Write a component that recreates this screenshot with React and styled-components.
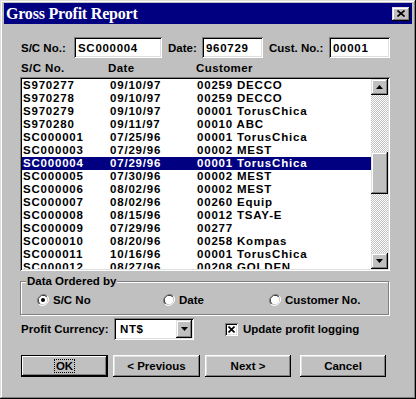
import React from 'react';
import styled, { createGlobalStyle } from 'styled-components';

const GlobalStyle = createGlobalStyle`
  body { margin: 0; background: #c0c0c0; }
  * { box-sizing: border-box; }
`

const raised = `
  box-shadow: inset -1px -1px #000, inset 1px 1px #dfdfdf, inset -2px -2px #808080, inset 2px 2px #fff;
`
const sunken = `
  box-shadow: inset 1px 1px #808080, inset -1px -1px #fff, inset 2px 2px #000, inset -2px -2px #dfdfdf;
`

const Window = styled.div`
  width: 416px;
  height: 399px;
  background: #c0c0c0;
  padding: 3px 4px 4px 4px;
  ${raised}
  font-family: "Liberation Sans", Arial, sans-serif;
  font-weight: bold;
  font-size: 11.5px;
  color: #000;
  white-space: nowrap;
  display: flex;
  flex-direction: column;
`

const TitleBar = styled.div`
  height: 21px;
  background: #000080;
  display: flex;
  align-items: center;
  justify-content: space-between;
  padding: 0 2px 0 2px;
`

const Title = styled.span`
  font-family: "Liberation Serif", "Times New Roman", serif;
  font-weight: bold;
  font-size: 16px;
  letter-spacing: -0.2px;
  color: #fff;
`

const CloseButton = styled.div`
  width: 18px;
  height: 14px;
  background: #c0c0c0;
  ${raised}
  display: flex;
  align-items: center;
  justify-content: center;
`

const Content = styled.div`
  padding: 0 22px 0 16px;
  display: flex;
  flex-direction: column;
`

const TopRow = styled.div`
  margin-top: 13px;
  padding-left: 1px;
  display: flex;
  gap: 6px;
  height: 21px;
`

const Field = styled.label`
  display: grid;
  grid-template-columns: ${p => p.lw}px ${p => p.iw}px;
  align-items: center;
`

const TextBox = styled.div`
  height: 21px;
  background: #fff;
  ${sunken}
  padding: 0 4px;
  letter-spacing: 0.7px;
  display: flex;
  align-items: center;
`

const HeaderRow = styled.div`
  margin-top: 4px;
  display: grid;
  grid-template-columns: 87px 88px 1fr;
  padding-left: 1px;
  line-height: 13px;
  letter-spacing: 0.4px;
`

const ListBox = styled.div`
  margin-top: 2px;
  height: 194px;
  background: #fff;
  ${sunken}
  padding: 2px;
  display: flex;
`

const Rows = styled.div`
  flex: 1;
  overflow: hidden;
`

const Row = styled.div`
  display: grid;
  grid-template-columns: 87px 87px 1fr;
  padding-left: 1px;
  height: 13px;
  line-height: 13px;
  letter-spacing: 0.8px;
  background: ${p => p.selected ? '#000080' : 'transparent'};
  color: ${p => p.selected ? '#fff' : '#000'};
`

const ScrollBar = styled.div`
  width: 17px;
  display: flex;
  flex-direction: column;
  background: repeating-conic-gradient(#c0c0c0 0 25%, #fff 0 50%) 0 0 / 2px 2px;
`

const ScrollButton = styled.div`
  flex: none;
  height: 16px;
  background: #c0c0c0;
  ${raised}
  display: flex;
  align-items: center;
  justify-content: center;
`

const Track = styled.div`
  flex: 1;
  display: flex;
  flex-direction: column;
  padding-top: ${p => p.offset}px;
`

const Thumb = styled.div`
  height: 42px;
  background: #c0c0c0;
  ${raised}
`

const Group = styled.fieldset`
  margin: 4px 1px 0 0;
  padding: 6px 0 8px 16px;
  border: 1px solid #808080;
  box-shadow: inset 1px 1px #fff, 1px 1px #fff;
  display: flex;
`

const Legend = styled.legend`
  margin-left: -11px;
  padding: 0 1px;
  line-height: 13px;
  background: #c0c0c0;
`

const RadioItem = styled.div`
  width: ${p => p.w ? `${p.w}px` : 'auto'};
  display: flex;
  align-items: center;
  gap: 4px;
`

const CurrencyRow = styled.div`
  margin-top: 3px;
  height: 22px;
  display: flex;
  align-items: center;
  padding-left: 1px;
`

const FieldLabel = styled.span`
  width: ${p => p.w}px;
`

const Combo = styled.div`
  width: 80px;
  height: 22px;
  background: #fff;
  ${sunken}
  padding: 2px 2px 2px 6px;
  letter-spacing: 0.6px;
  display: flex;
  align-items: center;
  justify-content: space-between;
`

const ComboButton = styled.div`
  width: 16px;
  height: 18px;
  background: #c0c0c0;
  ${raised}
  display: flex;
  align-items: center;
  justify-content: center;
`

const Check = styled.div`
  margin-left: 31px;
  display: flex;
  align-items: center;
  gap: 5px;
`

const CheckBox = styled.div`
  width: 13px;
  height: 13px;
  background: #fff;
  ${sunken}
  display: flex;
  align-items: center;
  justify-content: center;
`

const ButtonRow = styled.div`
  margin-top: 15px;
  display: flex;
  gap: 5px;
  padding-left: 1px;
`

const Button = styled.div`
  width: ${p => p.w}px;
  height: 22px;
  margin-left: ${p => p.ml || 0}px;
  background: #c0c0c0;
  ${p => p.primary
    ? 'box-shadow: inset 0 0 0 1px #000, inset -2px -2px #000, inset 2px 2px #fff, inset -3px -3px #808080;'
    : 'box-shadow: inset -1px -1px #000, inset 1px 1px #fff, inset -2px -2px #808080, inset 2px 2px #dfdfdf;'}
  display: flex;
  align-items: center;
  justify-content: center;
`

const Focus = styled.span`
  outline: 1px dotted #000;
  padding: 0 1px;
`

const Triangle = ({ up }) => (
  <svg width="7" height="4" viewBox="0 0 7 4">
    <path d={up ? 'M3.5 0 L7 4 L0 4 Z' : 'M0 0 L7 0 L3.5 4 Z'} fill="#000" />
  </svg>
)

const Radio = ({ on }) => (
  <svg width="12" height="12" viewBox="0 0 12 12">
    <path d="M10.2 1.8 A6 6 0 0 0 1.8 10.2" fill="none" stroke="#808080" strokeWidth="1" />
    <path d="M9.5 2.5 A5 5 0 0 0 2.5 9.5" fill="none" stroke="#000" strokeWidth="1" />
    <path d="M1.8 10.2 A6 6 0 0 0 10.2 1.8" fill="none" stroke="#fff" strokeWidth="1" />
    <circle cx="6" cy="6" r="4.3" fill="#fff" />
    {on && <circle cx="6" cy="6" r="2" fill="#000" />}
  </svg>
)

const rows = [
  ['S970277', '09/10/97', '00259 DECCO'],
  ['S970278', '09/10/97', '00259 DECCO'],
  ['S970279', '09/10/97', '00001 TorusChica'],
  ['S970280', '09/11/97', '00010 ABC'],
  ['SC000001', '07/25/96', '00001 TorusChica'],
  ['SC000003', '07/29/96', '00002 MEST'],
  ['SC000004', '07/29/96', '00001 TorusChica'],
  ['SC000005', '07/30/96', '00002 MEST'],
  ['SC000006', '08/02/96', '00002 MEST'],
  ['SC000007', '08/02/96', '00260 Equip'],
  ['SC000008', '08/15/96', '00012 TSAY-E'],
  ['SC000009', '07/29/96', '00277'],
  ['SC000010', '08/20/96', '00258 Kompas'],
  ['SC000011', '10/16/96', '00001 TorusChica'],
  ['SC000012', '08/27/96', '00208 GOLDEN'],
]

const App = () => {
  return (
    <Window>
      <GlobalStyle />
      <TitleBar>
        <Title>Gross Profit Report</Title>
        <CloseButton>
          <svg width="8" height="7" viewBox="0 0 8 7">
            <path d="M0.5 0.5 L7.5 6.5 M7.5 0.5 L0.5 6.5" stroke="#000" strokeWidth="1.6" />
          </svg>
        </CloseButton>
      </TitleBar>
      <Content>
        <TopRow>
          <Field lw={53} iw={88}>S/C No.:<TextBox>SC000004</TextBox></Field>
          <Field lw={34} iw={61}>Date:<TextBox>960729</TextBox></Field>
          <Field lw={60} iw={61}>Cust. No.:<TextBox>00001</TextBox></Field>
        </TopRow>
        <HeaderRow>
          <span>S/C No.</span>
          <span>Date</span>
          <span>Customer</span>
        </HeaderRow>
        <ListBox>
          <Rows>
            {rows.map((r, i) => (
              <Row key={r[0]} selected={i === 6}>
                <span>{r[0]}</span>
                <span>{r[1]}</span>
                <span>{r[2]}</span>
              </Row>
            ))}
          </Rows>
          <ScrollBar>
            <ScrollButton><Triangle up /></ScrollButton>
            <Track offset={57}>
              <Thumb />
            </Track>
            <ScrollButton><Triangle /></ScrollButton>
          </ScrollBar>
        </ListBox>
        <Group>
          <Legend>Data Ordered by</Legend>
          <RadioItem w={126}><Radio on />S/C No</RadioItem>
          <RadioItem w={106}><Radio />Date</RadioItem>
          <RadioItem><Radio />Customer No.</RadioItem>
        </Group>
        <CurrencyRow>
          <FieldLabel w={93}>Profit Currency:</FieldLabel>
          <Combo>
            NT$
            <ComboButton><Triangle /></ComboButton>
          </Combo>
          <Check>
            <CheckBox>
              <svg width="7" height="7" viewBox="0 0 7 7">
                <path d="M0.5 0.5 L6.5 6.5 M6.5 0.5 L0.5 6.5" stroke="#000" strokeWidth="1.6" />
              </svg>
            </CheckBox>
            Update profit logging
          </Check>
        </CurrencyRow>
        <ButtonRow>
          <Button w={87} primary><Focus>OK</Focus></Button>
          <Button w={87}>&lt; Previous</Button>
          <Button w={86}>Next &gt;</Button>
          <Button w={86} ml={4}>Cancel</Button>
        </ButtonRow>
      </Content>
    </Window>
  )
}

export default App
